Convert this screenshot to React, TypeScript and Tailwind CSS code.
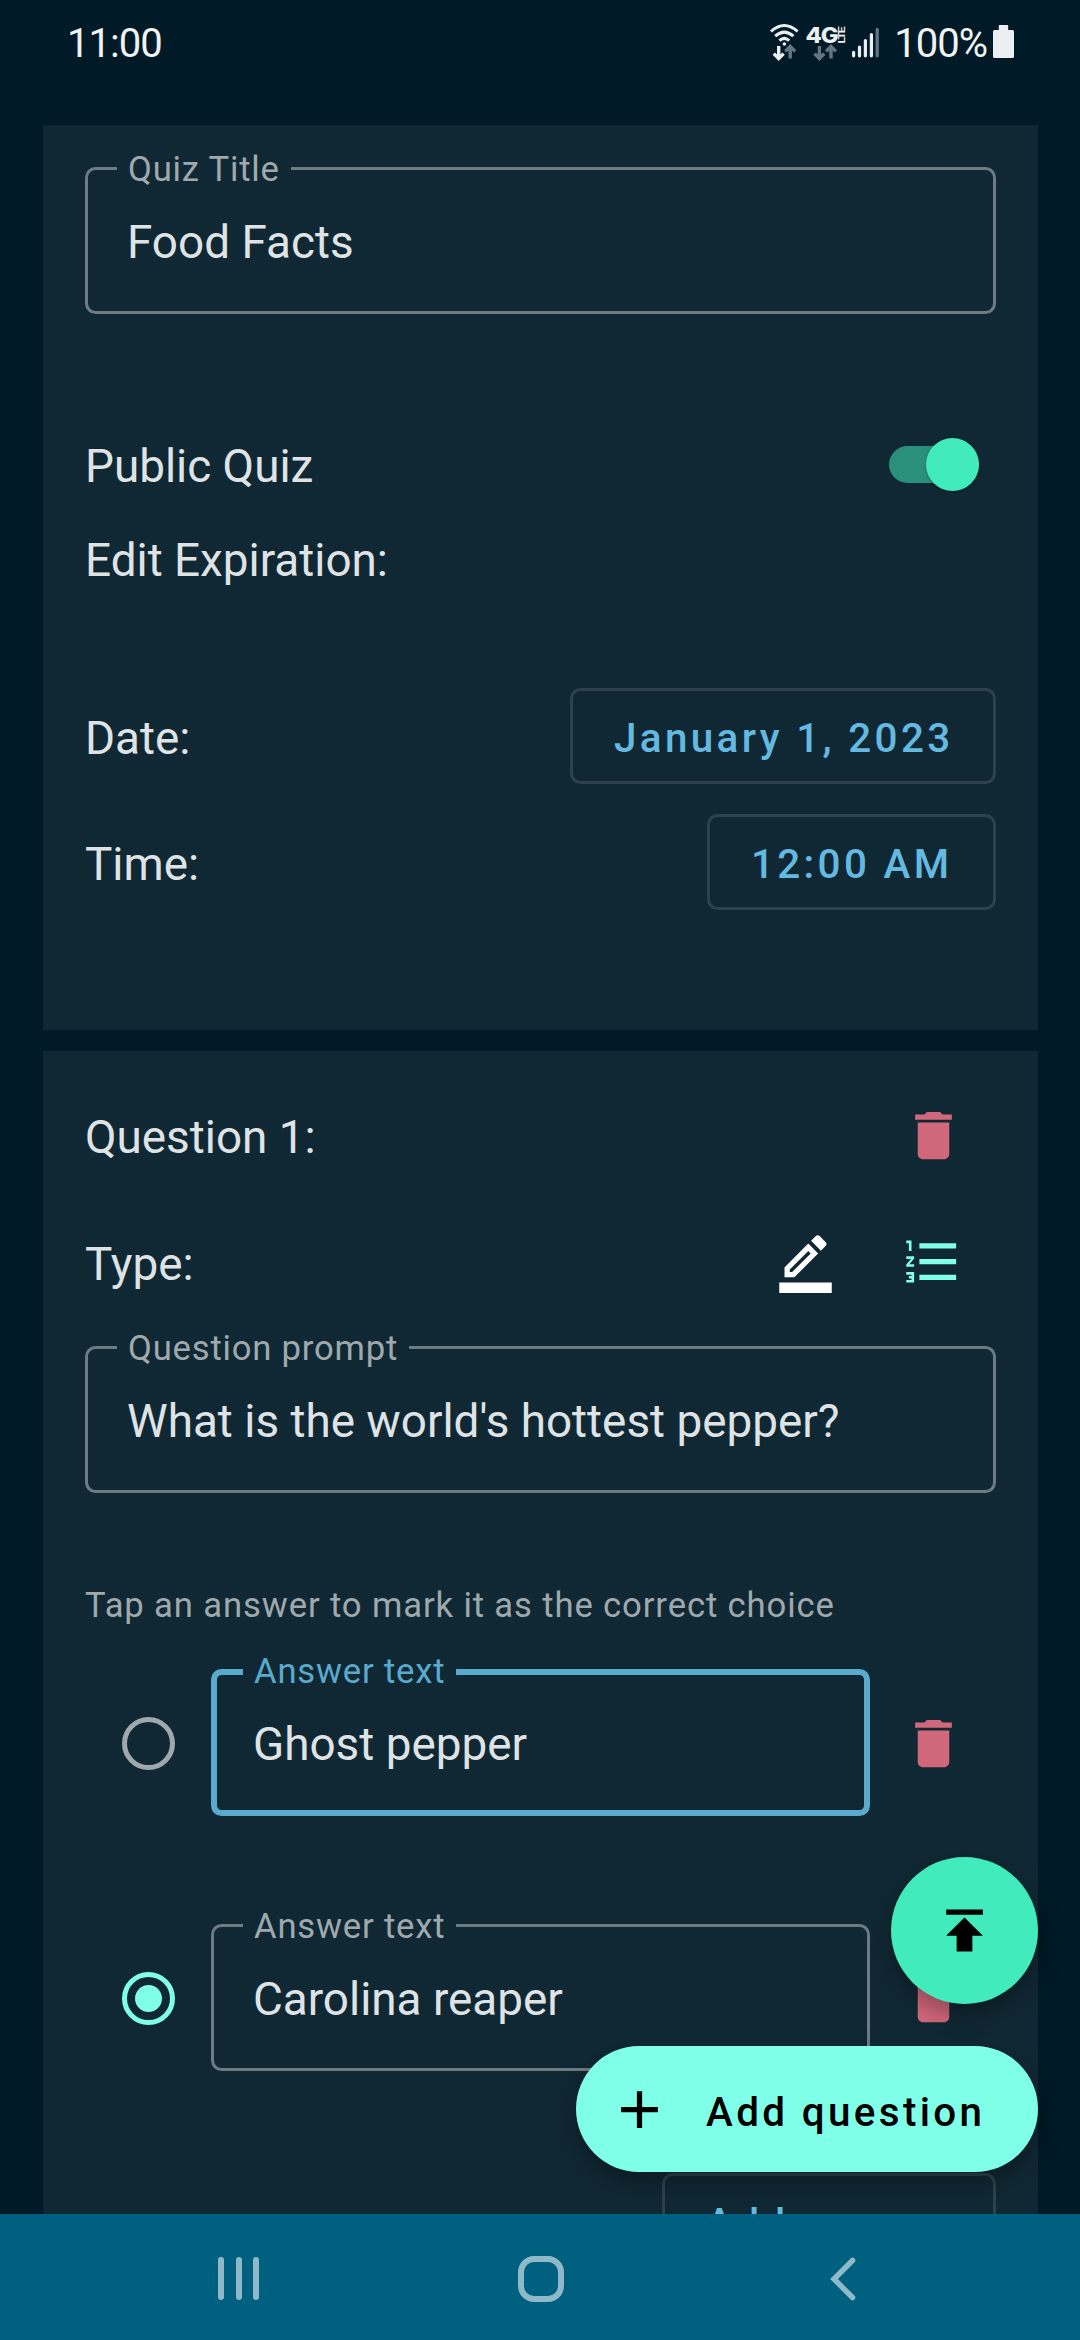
import React from 'react';

function TrashIcon() {
  return (
    <svg viewBox="0 0 24 24" className="size-[63px] shrink-0 fill-[#d0677a]">
      <path d="M6 19c0 1.1.9 2 2 2h8c1.1 0 2-.9 2-2V7H6v12zM19 4h-3.5l-1-1h-5l-1 1H5v2h14V4z" />
    </svg>
  );
}

function StatusIcons() {
  return (
    <svg viewBox="0 0 112 44" className="mr-[13px] mt-[2.5px] h-[44px] w-[112px]" fill="none">
      {/* wifi */}
      <g stroke="#eceff1" strokeWidth="3">
        <path d="M2 11.5 Q15.3 -0.5 28.6 11.5" />
        <path d="M6.2 16.2 Q15.3 8 24.4 16.2" />
        <path d="M10.4 20.6 Q15.3 16.2 20.2 20.6" />
      </g>
      <circle cx="15.4" cy="24" r="1.8" fill="#eceff1" />
      <path d="M9.7 26v12M4.8 33.6l4.9 4.9 4.9-4.9" stroke="#eceff1" strokeWidth="3.4" />
      <path d="M21.2 38.4v-12M16.3 31.4l4.9-4.9 4.9 4.9" stroke="#667680" strokeWidth="3.4" />
      {/* mobile network */}
      <text x="36.5" y="23.2" textLength="32" lengthAdjust="spacingAndGlyphs" fill="#eceff1" fontFamily="Inter, sans-serif" fontWeight="800" fontSize="21.5">
        4G
      </text>
      <text transform="translate(75.8 23.6) rotate(-90)" textLength="16" lengthAdjust="spacingAndGlyphs" fill="#eceff1" fontFamily="Roboto, sans-serif" fontWeight="700" fontSize="9.5">
        LTE
      </text>
      <path d="M50.4 26v12M45.5 33.6l4.9 4.9 4.9-4.9M62 38.4v-12M57.1 31.4l4.9-4.9 4.9 4.9" stroke="#667680" strokeWidth="3.4" />
      {/* signal */}
      <g strokeWidth="3.2" strokeLinecap="round" stroke="#eceff1">
        <path d="M84.6 32.4v3.4M90.5 27v8.8M96.4 20.6v15.2M102.4 14.6v21.2" />
        <path d="M108.2 9.4v26.4" stroke="#667680" />
      </g>
    </svg>
  );
}

function StatusBar() {
  return (
    <header className="flex h-[125px] items-start justify-between pl-[67px] pr-[66px] pt-[17px] text-[40px] leading-[53px] tracking-[-1px] text-[#f0f2f3]">
      <span>11:00</span>
      <div className="flex">
        <StatusIcons />
        <span>100%</span>
        <svg viewBox="0 0 21 33" className="ml-[6px] mt-[8px] h-[33px] w-[21px] fill-[#eceff1]">
          <path d="M6.6 0h7.8q.8 0 .8.8V5h4.3q1.5 0 1.5 1.5v25q0 1.5-1.5 1.5h-18Q0 33 0 31.500V6.500Q0 5 1.500 5h4.300V.8q0-.8.8-.8z" />
        </svg>
      </div>
    </header>
  );
}

function OutlinedField({ label, value, focused = false, className = '' }: { label: string; value: string; focused?: boolean; className?: string }) {
  return (
    <div
      className={`relative h-[147px] rounded-[10.5px] px-[42px] text-[45.85px] leading-[150px] ring-inset ${
        focused ? 'ring-[6px] ring-[#5aaacd]' : 'ring-[3px] ring-[#6d7c82]'
      } ${className}`}
    >
      <span
        className={`absolute left-[32px] top-[-18px] bg-[#102833] px-[11px] text-[34.65px] leading-[40px] tracking-[0.8px] ${
          focused ? 'text-[#5aaacd]' : 'text-[#9fa9ad]'
        }`}
      >
        {label}
      </span>
      {value}
    </div>
  );
}

function PickerButton({ children, className }: { children: React.ReactNode; className: string }) {
  return (
    <button className={`h-[96px] whitespace-nowrap rounded-[10.5px] border-[3px] border-[#2d424b] pl-[41px] text-left text-[40.4px] font-medium leading-[95px] tracking-[3.35px] text-[#64b9e1] ${className}`}>
      {children}
    </button>
  );
}

function Radio({ checked = false }: { checked?: boolean }) {
  return (
    <div className={`ml-[37px] mt-[48px] flex size-[53px] items-center justify-center rounded-full border-[5.25px] ${checked ? 'border-[#80ffe8]' : 'border-[#9fa9ad]'}`}>
      {checked && <div className="size-[27px] rounded-full bg-[#80ffe8]" />}
    </div>
  );
}

function AnswerRow({ value, focused, checked }: { value: string; focused?: boolean; checked?: boolean }) {
  return (
    <div className="flex items-start">
      <Radio checked={checked} />
      <OutlinedField label="Answer text" value={value} focused={focused} className="ml-[36px] w-[659px]" />
      <div className="ml-[32px] mt-[43px]">
        <TrashIcon />
      </div>
    </div>
  );
}

function NavigationBar() {
  return (
    <nav className="relative z-10 flex h-[126px] shrink-0 items-center bg-[#006080] pl-[218px] pt-[3px]">
      <div className="flex gap-[11.500px]">
        <div className="h-[43px] w-[6px] rounded-full bg-[#8fb9c9]" />
        <div className="h-[43px] w-[6px] rounded-full bg-[#8fb9c9]" />
        <div className="h-[43px] w-[6px] rounded-full bg-[#8fb9c9]" />
      </div>
      <div className="ml-[259px] h-[46px] w-[46px] rounded-[16px] border-[6px] border-[#8fb9c9]" />
      <svg viewBox="0 0 26 44" className="ml-[266px] h-[44px] w-[26px]" fill="none" stroke="#8fb9c9" strokeWidth="5.500" strokeLinecap="round">
        <path d="M22.500 3.500 4 22l18.500 18.500" />
      </svg>
    </nav>
  );
}

export default function App() {
  return (
    <div className="relative flex h-[2340px] w-[1080px] flex-col overflow-hidden bg-[#001a27] font-['Roboto',sans-serif] text-[#dfe3e5]">
      <StatusBar />

      <main className="flex h-[2089px] flex-col gap-[21px] overflow-hidden pl-[43px] pr-[42px] text-[45.85px]">
        <section className="h-[905px] shrink-0 bg-[#102833] px-[42px] pt-[42px]">
          <OutlinedField label="Quiz Title" value="Food Facts" />
          <div className="mt-[122px] flex h-[60px] items-start justify-between leading-[60px]">
            <span>Public Quiz</span>
            <div className="mr-[17px] mt-[10px] flex h-[37px] w-[90px] items-center justify-end rounded-full bg-[#2a907b]">
              <div className="size-[53px] shrink-0 rounded-full bg-[#42ebbb] shadow-[0_1px_3px_rgba(0,0,0,0.3)]" />
            </div>
          </div>
          <div className="mt-[34px] leading-[60px]">Edit Expiration:</div>
          <div className="mt-[98px] flex h-[96px] justify-between leading-[100px]">
            <span>Date:</span>
            <PickerButton className="w-[426px]">January 1, 2023</PickerButton>
          </div>
          <div className="mt-[30px] flex h-[96px] justify-between leading-[100px]">
            <span>Time:</span>
            <PickerButton className="w-[289px]">12:00 AM</PickerButton>
          </div>
        </section>

        <section className="h-[1300px] shrink-0 bg-[#102833] px-[42px] pt-[53px]">
          <div className="flex h-[63px] justify-between pr-[31px] leading-[66px]">
            <span>Question 1:</span>
            <TrashIcon />
          </div>
          <div className="mt-[63px] flex h-[63px] pr-[32px] leading-[69px]">
            <span className="flex-1">Type:</span>
            <svg viewBox="0 0 24 24" className="mr-[64px] size-[63px] fill-white">
              <path d="M16.810 8.940l-3.750-3.750L4 14.250V18h3.750l9.060-9.060zM6 16v-.92l7.060-7.060.92.92L6.920 16H6zM19.710 6.040c.39-.39.39-1.020 0-1.410l-2.340-2.340c-.39-.39-1.020-.39-1.410 0l-1.830 1.830 3.750 3.750 1.830-1.830zM2 20h20v4H2z" />
            </svg>
            <svg viewBox="0 0 24 24" className="size-[63px] fill-[#80ffe8]">
              <path d="M2 17h2v.5H3v1h1v.5H2v1h3v-4H2v1zm1-9h1V4H2v1h1v3zm-1 3h1.800L2 13.100v.9h3v-1H3.200L5 10.900V10H2v1zm5-6v2h14V5H7zm0 14h14v-2H7v2zm0-6h14v-2H7v2z" />
            </svg>
          </div>
          <OutlinedField label="Question prompt" value="What is the world's hottest pepper?" className="mt-[53px]" />
          <p className="mt-[92px] text-[34.65px] leading-[40px] tracking-[0.87px] text-[#9fa9ad]">Tap an answer to mark it as the correct choice</p>
          <div className="mt-[44px] flex flex-col gap-[108px]">
            <AnswerRow value="Ghost pepper" focused />
            <AnswerRow value="Carolina reaper" checked />
          </div>
          <div className="mt-[102px] flex justify-end">
            <PickerButton className="w-[334px]">Add answer</PickerButton>
          </div>
        </section>
      </main>

      <button className="absolute left-[891px] top-[1857px] flex size-[147px] items-center justify-center rounded-full bg-[#42ebbb] shadow-[0_10px_24px_rgba(0,0,0,0.32)]">
        <svg viewBox="0 0 24 24" className="size-[63px] fill-black">
          <path d="M5 4v2h14V4H5zm0 10h4v6h6v-6h4l-7-7-7 7z" />
        </svg>
      </button>
      <button className="absolute left-[576px] top-[2046px] flex h-[126px] w-[462px] items-center whitespace-nowrap rounded-full bg-[#80ffe8] pl-[32px] text-[40.4px] font-medium tracking-[3.35px] text-black shadow-[0_10px_24px_rgba(0,0,0,0.32)]">
        <svg viewBox="0 0 24 24" className="size-[63px] fill-black">
          <path d="M19 13h-6v6h-2v-6H5v-2h6V5h2v6h6v2z" />
        </svg>
        <span className="ml-[35px] pt-[8px] leading-[60px]">Add question</span>
      </button>

      <NavigationBar />
    </div>
  );
}
